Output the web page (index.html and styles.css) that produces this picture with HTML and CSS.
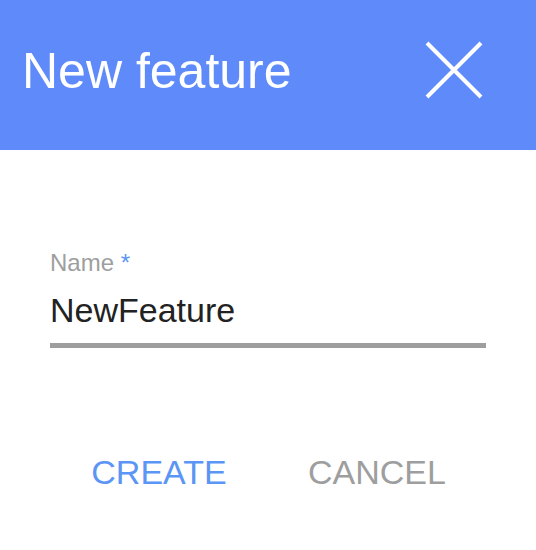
FILE: index.html
```html
<!DOCTYPE html>
<html lang="en">
<head>
    <meta charset="UTF-8">
    <meta name="viewport" content="width=device-width, initial-scale=1.0">
    <title>New feature</title>
    <link rel="stylesheet" href="styles.css">
</head>
<body>
    <header class="dialog-header">
        <h1>New feature</h1>
        <button class="close-button" aria-label="Close">
            <svg width="60" height="60" viewBox="0 0 60 60">
                <path d="M3 3 L57 57 M57 3 L3 57" stroke="#fff" stroke-width="4" fill="none"/>
            </svg>
        </button>
    </header>

    <main class="dialog-body">
        <div class="field">
            <label for="name">Name <span class="required">*</span></label>
            <input id="name" type="text" value="NewFeature">
        </div>

        <div class="actions">
            <button class="action create">CREATE</button>
            <button class="action cancel">CANCEL</button>
        </div>
    </main>
</body>
</html>
```

FILE: styles.css
```css
/* Colors */
:root {
    --primary-color: #5f8afa;
    --accent-color: #5b95f5;
    --muted-color: #9e9e9e;
    --text-color: #222222;
}

body {
    font-family: 'Liberation Sans', Arial, sans-serif;
    margin: 0;
    background-color: #fff;
    color: var(--text-color);
}

/* Header */
.dialog-header {
    background-color: var(--primary-color);
    height: 150px;
    display: flex;
    align-items: center;
    justify-content: space-between;
    padding: 0 52px 0 22px;
    box-sizing: border-box;
}

.dialog-header h1 {
    margin: 0 0 8px 0;
    font-size: 50px;
    font-weight: normal;
    color: #fff;
}

.close-button {
    background: none;
    border: none;
    padding: 0;
    width: 60px;
    height: 60px;
    cursor: pointer;
    margin-bottom: 10px;
}

.close-button svg {
    display: block;
}

/* Body */
.dialog-body {
    padding: 99px 50px 0 50px;
}

.field label {
    display: block;
    font-size: 24px;
    color: var(--muted-color);
}

.required {
    color: var(--accent-color);
}

.field input {
    display: block;
    width: 100%;
    box-sizing: border-box;
    border: none;
    border-bottom: 5px solid var(--muted-color);
    outline: none;
    padding: 14px 0 13px 0;
    font-family: inherit;
    font-size: 34px;
    color: var(--text-color);
    background: none;
}

/* Buttons */
.actions {
    display: flex;
    margin-top: 105px;
}

.action {
    flex: 1;
    background: none;
    border: none;
    padding: 0;
    font-family: inherit;
    font-size: 34px;
    cursor: pointer;
}

.create {
    color: var(--accent-color);
}

.cancel {
    color: var(--muted-color);
}
```
